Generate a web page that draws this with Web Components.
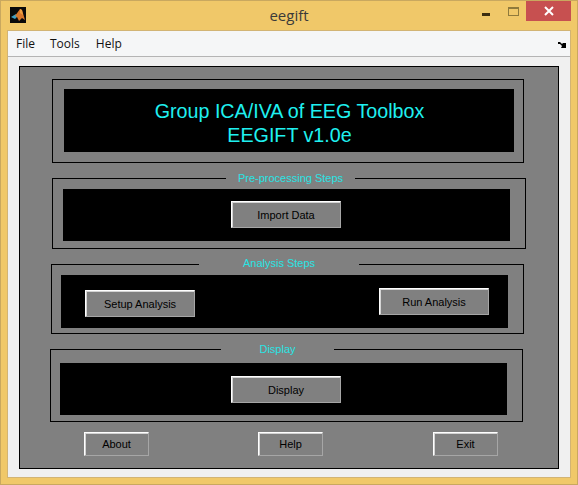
<!DOCTYPE html>
<html>
<head>
<meta charset="utf-8">
<title>eegift</title>
<style>
  html, body { margin: 0; padding: 0; overflow: hidden; background: #f0c869; }
</style>
</head>
<body>
<eeg-window heading="eegift">
  <eeg-menubar></eeg-menubar>
  <eeg-panel></eeg-panel>
</eeg-window>

<script>
const windowTemplate = document.createElement('template');
windowTemplate.innerHTML = `
  <style>
    :host {
      display: block;
      box-sizing: border-box;
      width: 578px;
      height: 485px;
      padding: 0 6px 6px;
      border: 1px solid #c9a85f;
      background: #f0c869;
      font-family: "Open Sans", "Liberation Sans", sans-serif;
    }
    .bar {
      display: grid;
      grid-template-columns: 1fr auto 1fr;
      height: 29px;
    }
    .logo {
      width: 16px;
      height: 16px;
      margin: 6px 0 0 3px;
      display: block;
    }
    .heading {
      font-size: 15px;
      line-height: 29px;
      color: #3a3a3a;
    }
    .controls {
      display: flex;
      justify-content: flex-end;
      align-items: flex-start;
    }
    .min {
      width: 8px;
      height: 3px;
      margin: 12px 18px 0 0;
      background: #3d2e10;
    }
    .max {
      box-sizing: border-box;
      width: 11px;
      height: 9px;
      margin: 6px 7px 0 0;
      border: 1px solid #8f7a3c;
      border-top-width: 2px;
    }
    .close {
      width: 45px;
      height: 20px;
      background: #c75050;
      display: flex;
      align-items: center;
      justify-content: center;
    }
    .client {
      box-sizing: border-box;
      height: 448px;
      border: 1px solid #d2b474;
      background: #f0f0f0;
    }
  </style>

  <div class="bar">
    <svg class="logo" viewBox="0 0 16 16">
      <rect width="16" height="16" fill="#0a0a0a"/>
      <path d="M1 10 L6 7 L8 9 L5 12 Z" fill="#3f9fc4"/>
      <path d="M5 9 L10 2 L12 3 L15 13 L12 11 L9 14 L7 10 Z" fill="#d9772a"/>
      <path d="M10 2 L12 3 L13 8 L10 6 Z" fill="#f0a040"/>
    </svg>
    <div class="heading"></div>
    <div class="controls">
      <div class="min"></div>
      <div class="max"></div>
      <div class="close">
        <svg width="10" height="10" viewBox="0 0 10 10">
          <path d="M1 1 L9 9 M9 1 L1 9" stroke="#fff" stroke-width="2" fill="none"/>
        </svg>
      </div>
    </div>
  </div>
  <div class="client"><slot></slot></div>
`;

class EegWindow extends HTMLElement {
  constructor() {
    super();
    this.attachShadow({mode: 'open'});
    this.shadowRoot.appendChild(windowTemplate.content.cloneNode(true));
  }//end constructor

  connectedCallback() {
    this.shadowRoot.querySelector('.heading').textContent = this.getAttribute('heading');
  }//end connectedCallback
}//end EegWindow

const menubarTemplate = document.createElement('template');
menubarTemplate.innerHTML = `
  <style>
    :host {
      display: flex;
      box-sizing: border-box;
      height: 26px;
      padding-left: 8px;
      gap: 16px;
      align-items: center;
      background: #f5f6f7;
      border-bottom: 1px solid #b4b4b4;
      font: 12px "Open Sans", "Liberation Sans", sans-serif;
      color: #111;
    }
    span:nth-child(3) { margin-left: -1px; }
    svg {
      margin-left: auto;
      margin-right: 4px;
      margin-top: 4px;
    }
  </style>

  <span>File</span>
  <span>Tools</span>
  <span>Help</span>
  <svg width="8" height="7" viewBox="0 0 8 7">
    <path d="M0 0 H2 L4 2 L5 1 L8 1 L8 6 L7 6 L3 6 L4 4 L2 2 H0 Z" fill="#000"/>
  </svg>
`;

class EegMenubar extends HTMLElement {
  constructor() {
    super();
    this.attachShadow({mode: 'open'});
    this.shadowRoot.appendChild(menubarTemplate.content.cloneNode(true));
  }//end constructor
}//end EegMenubar

const frameTemplate = document.createElement('template');
frameTemplate.innerHTML = `
  <style>
    :host {
      display: block;
      box-sizing: border-box;
      position: relative;
      border: 1px solid #000;
    }
    .legend {
      position: absolute;
      top: var(--legend-top, -8px);
      height: 15px;
      background: #808080;
      color: #28e4e4;
      font-size: 11px;
      line-height: 15px;
      text-align: center;
      white-space: nowrap;
    }
    .well {
      background: #000;
      height: 100%;
      box-sizing: border-box;
    }
  </style>

  <div class="legend"></div>
  <div class="well"><slot></slot></div>
`;

class GiftFrame extends HTMLElement {
  constructor() {
    super();
    this.attachShadow({mode: 'open'});
    this.shadowRoot.appendChild(frameTemplate.content.cloneNode(true));
  }//end constructor

  connectedCallback() {
    const legend = this.shadowRoot.querySelector('.legend');
    if(this.hasAttribute('legend')) {
      legend.textContent = this.getAttribute('legend');
      legend.style.left = this.getAttribute('gap-left') + 'px';
      legend.style.width = this.getAttribute('gap-width') + 'px';
    } else {
      legend.remove();
    }
  }//end connectedCallback
}//end GiftFrame

const buttonTemplate = document.createElement('template');
buttonTemplate.innerHTML = `
  <style>
    :host {
      display: inline-block;
    }
    button {
      display: block;
      box-sizing: border-box;
      width: var(--w, 110px);
      height: var(--h, 27px);
      margin: 0;
      padding: 0;
      background: #808080;
      color: #000;
      font: 11px "Liberation Sans", Arial, sans-serif;
      border: 1px solid;
      border-color: #fff #a6a6a6 #a6a6a6 #fff;
      box-shadow: inset 1px 1px 0 #d4d4d4;
      border-radius: 0;
      outline: none;
    }
  </style>

  <button><slot></slot></button>
`;

class GiftButton extends HTMLElement {
  constructor() {
    super();
    this.attachShadow({mode: 'open'});
    this.shadowRoot.appendChild(buttonTemplate.content.cloneNode(true));
  }//end constructor
}//end GiftButton

const panelTemplate = document.createElement('template');
panelTemplate.innerHTML = `
  <style>
    :host {
      display: block;
      box-sizing: border-box;
      width: 540px;
      height: 403px;
      margin: 9px 0 0 11px;
      border: 1px solid #000;
      background: #808080;
      font-family: "Liberation Sans", Arial, sans-serif;
      padding-top: 12px;
    }
    gift-frame { margin-bottom: 15px; }
    .banner { width: 472px; height: 84px; margin-left: 32px; padding: 9px 9px 10px 11px; }
    .pre { width: 474px; height: 71px; margin-left: 32px; padding: 10px 15px 7px 10px; }
    .analysis { width: 473px; height: 70px; margin-left: 31px; padding: 10px 15px 5px 9px; --legend-top: -9px; }
    .display { width: 473px; height: 73px; margin-left: 30px; padding: 13px 15px 6px 9px; margin-bottom: 10px; }

    .title {
      box-sizing: border-box;
      height: 100%;
      padding: 4px 0 0 1px;
      display: flex;
      flex-direction: column;
      align-items: center;
      justify-content: center;
      color: #1ff0f0;
      font-size: 19.7px;
      line-height: 24px;
    }
    .single { padding: 12px 0 0 168px; }
    .display .single { padding: 13px 0 0 171px; }
    .pair {
      display: flex;
      justify-content: space-between;
      align-items: flex-start;
      padding: 13px 19px 0 24px;
    }
    .pair .low { margin-top: 2px; }
    .bottom {
      display: flex;
      padding-left: 64px;
      --w: 65px;
      --h: 24px;
    }
    .bottom gift-button:nth-child(2) { margin-left: 109px; }
    .bottom gift-button:nth-child(3) { margin-left: 110px; }
  </style>

  <gift-frame class="banner">
    <div class="title">
      <div>Group ICA/IVA of EEG Toolbox</div>
      <div>EEGIFT v1.0e</div>
    </div>
  </gift-frame>

  <gift-frame class="pre" legend="Pre-processing Steps" gap-left="173" gap-width="129">
    <div class="single"><gift-button>Import Data</gift-button></div>
  </gift-frame>

  <gift-frame class="analysis" legend="Analysis Steps" gap-left="147" gap-width="160">
    <div class="pair">
      <gift-button class="low">Setup Analysis</gift-button>
      <gift-button>Run Analysis</gift-button>
    </div>
  </gift-frame>

  <gift-frame class="display" legend="Display" gap-left="170" gap-width="113">
    <div class="single"><gift-button>Display</gift-button></div>
  </gift-frame>

  <div class="bottom">
    <gift-button>About</gift-button>
    <gift-button>Help</gift-button>
    <gift-button>Exit</gift-button>
  </div>
`;

class EegPanel extends HTMLElement {
  constructor() {
    super();
    this.attachShadow({mode: 'open'});
    this.shadowRoot.appendChild(panelTemplate.content.cloneNode(true));
  }//end constructor
}//end EegPanel

customElements.define('gift-button', GiftButton);
customElements.define('gift-frame', GiftFrame);
customElements.define('eeg-menubar', EegMenubar);
customElements.define('eeg-panel', EegPanel);
customElements.define('eeg-window', EegWindow);
</script>
</body>
</html>
